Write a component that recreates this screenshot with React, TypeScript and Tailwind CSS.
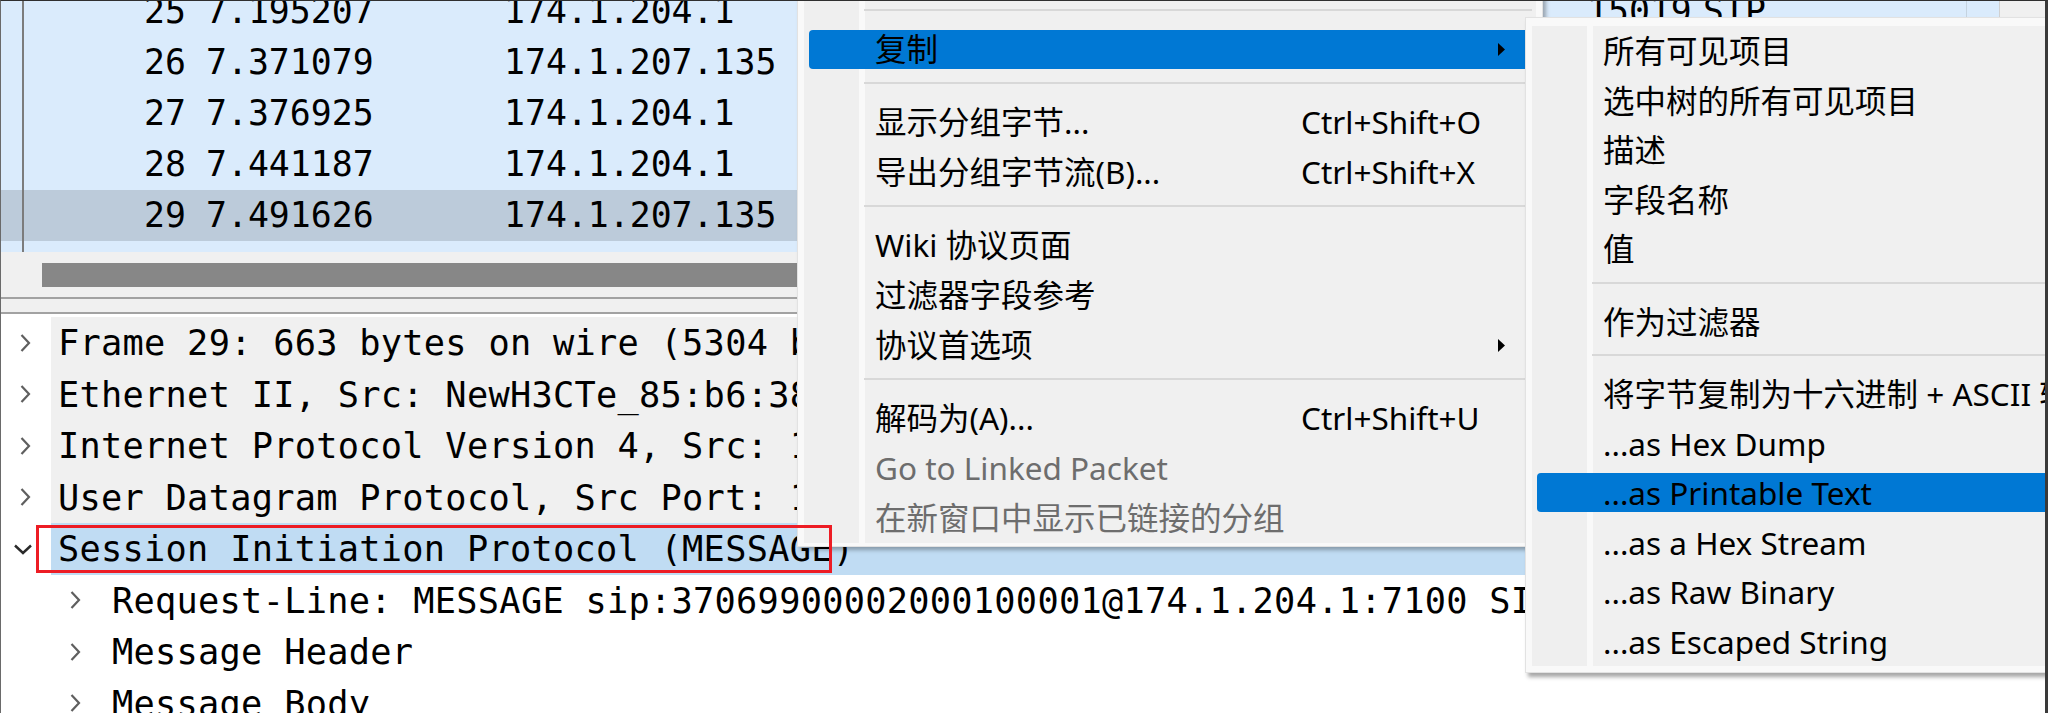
import React from 'react'

const packets = [
  { no: '25', time: '7.195207', src: '174.1.204.1', port: '15019', proto: 'SIP' },
  { no: '26', time: '7.371079', src: '174.1.207.135', port: '7100', proto: 'SIP' },
  { no: '27', time: '7.376925', src: '174.1.204.1', port: '15019', proto: 'SIP' },
  { no: '28', time: '7.441187', src: '174.1.204.1', port: '15019', proto: 'SIP' },
  { no: '29', time: '7.491626', src: '174.1.207.135', port: '7100', proto: 'SIP', selected: true },
]

const tree = [
  { level: 0, shade: true, text: 'Frame 29: 663 bytes on wire (5304 bits), 663 bytes captured (5304 bits) on interface 0' },
  { level: 0, shade: true, text: 'Ethernet II, Src: NewH3CTe_85:b6:38' },
  { level: 0, shade: true, text: 'Internet Protocol Version 4, Src: 174.1.207.135, Dst: 174.1.204.1' },
  { level: 0, shade: true, text: 'User Datagram Protocol, Src Port: 15019, Dst Port: 7100' },
  { level: 0, open: true, selected: true, text: 'Session Initiation Protocol (MESSAGE)' },
  { level: 1, text: 'Request-Line: MESSAGE sip:37069900002000100001@174.1.204.1:7100 SIP/2.0' },
  { level: 1, text: 'Message Header' },
  { level: 1, text: 'Message Body' },
]

export default function App() {
  return (
    <div className="relative h-[713px] w-[2048px] overflow-hidden border-t border-l border-r-[3px] border-t-[#2f2f2f] border-l-[#6a6a6a] border-r-[#3a3a3a] bg-white font-['DejaVu_Sans_Mono',monospace] text-black">
      {/* Packet list */}
      <div className="flex h-[251px] bg-[#daebfc]">
        <div className="relative flex-1 overflow-hidden">
          <div className="-mt-[15px]">
            {packets.map((p) => (
              <PacketRow key={p.no} {...p} />
            ))}
          </div>
          {/* related packet line + column divider */}
          <div className="absolute left-[21px] top-0 h-full w-[2px] bg-[#7c7c7c]" />
          <div className="absolute left-[1965px] top-0 h-full w-px bg-[#c5d3e0]" />
        </div>
        <div className="w-[46px] border-l border-[#d0d0d0] bg-[#f0f0f0]" />
      </div>

      {/* Horizontal scrollbar + splitter */}
      <div className="h-[45px] bg-[#f0f0f0] pl-[41px] pt-[11px]">
        <div className="h-[24px] w-[1200px] bg-[#878787]" />
      </div>
      <div className="h-[17px] border-y-2 border-[#a2a2a2] bg-[#f0f0f0]" />

      {/* Packet details */}
      <div className="pt-[3px]">
        {tree.map((row, i) => (
          <TreeRow key={i} {...row} />
        ))}
      </div>

      {/* Context menu */}
      <div className="absolute left-[796px] top-[-7px] w-[746px] border border-[#e2e2e2] bg-[#f9f9f9] px-[6px] pt-[6px] pb-[3px] font-['Noto_Sans','Noto_Sans_CJK_SC',sans-serif] text-[31.5px] leading-none shadow-[3px_3px_4px_rgba(0,0,0,0.3)]">
        <div className="bg-[linear-gradient(to_right,#efefef_55px,#f9f9f9_55px,#f9f9f9_61px,#f0f0f0_61px)]">
          <Separator />
          <MenuItem label="复制" arrow active />
          <Separator />
          <MenuItem label="显示分组字节..." shortcut="Ctrl+Shift+O" />
          <MenuItem label="导出分组字节流(B)..." shortcut="Ctrl+Shift+X" />
          <Separator />
          <MenuItem label="Wiki 协议页面" />
          <MenuItem label="过滤器字段参考" />
          <MenuItem label="协议首选项" arrow />
          <Separator />
          <MenuItem label="解码为(A)..." shortcut="Ctrl+Shift+U" />
          <MenuItem label="Go to Linked Packet" disabled />
          <MenuItem label="在新窗口中显示已链接的分组" disabled />
        </div>
      </div>

      {/* Copy submenu */}
      <div className="absolute left-[1524px] top-[16px] w-[600px] border border-[#e2e2e2] bg-[#f9f9f9] px-[6px] pt-[8px] pb-[6px] font-['Noto_Sans','Noto_Sans_CJK_SC',sans-serif] text-[31.5px] leading-none shadow-[3px_4px_4px_rgba(0,0,0,0.35)]">
        <div className="bg-[linear-gradient(to_right,#efefef_55px,#f9f9f9_55px,#f9f9f9_61px,#f0f0f0_61px)]">
          <MenuItem sub label="所有可见项目" />
          <MenuItem sub label="选中树的所有可见项目" />
          <MenuItem sub label="描述" />
          <MenuItem sub label="字段名称" />
          <MenuItem sub label="值" />
          <Separator />
          <MenuItem sub label="作为过滤器" />
          <Separator />
          <MenuItem sub label="将字节复制为十六进制 + ASCII 转储" />
          <MenuItem sub label="...as Hex Dump" />
          <MenuItem sub label="...as Printable Text" active />
          <MenuItem sub label="...as a Hex Stream" />
          <MenuItem sub label="...as Raw Binary" />
          <MenuItem sub label="...as Escaped String" />
        </div>
      </div>

      {/* annotation */}
      <div className="pointer-events-none absolute left-[35px] top-[524px] h-[48px] w-[796px] border-[3px] border-[#ed1c24]" />
    </div>
  )
}

function PacketRow({ no, time, src, port, proto, selected }: any) {
  return (
    <div
      className={`flex h-[51px] items-center whitespace-nowrap text-[34.8px] leading-none ${
        selected ? 'bg-[#bccbda]' : ''
      }`}
    >
      <span className="w-[185px] shrink-0 text-right">{no}</span>
      <span className="w-[318px] shrink-0 pl-[20px]">{time}</span>
      <span className="w-[1083px] shrink-0">{src}</span>
      <span className="w-[116px] shrink-0">{port}</span>
      <span>{proto}</span>
    </div>
  )
}

function TreeRow({ level, text, open, shade, selected }: any) {
  const bg = selected ? 'bg-[#c0dcf3]' : shade ? 'bg-[#f0f0f0]' : 'bg-white'
  return (
    <div className="flex h-[51.5px] whitespace-nowrap text-[35.3px] leading-none tracking-[0.27px]">
      <div className={`flex w-[50px] shrink-0 items-center ${open ? 'pl-[12px]' : 'pl-[18px]'}`}>
        {level === 0 && (open ? <ChevronDown /> : <ChevronRight />)}
      </div>
      <div className={`flex flex-1 items-center ${bg} ${level === 0 ? 'pl-[7px]' : 'pl-[18px]'}`}>
        {level === 1 && (
          <span className="mr-[31px]">
            <ChevronRight />
          </span>
        )}
        <span>{text}</span>
      </div>
    </div>
  )
}

function ChevronRight() {
  return (
    <svg width="12" height="20" viewBox="0 0 12 20" className="block shrink-0">
      <path d="M2.5 2 L10 10 L2.5 18" fill="none" stroke="#5f5f5f" strokeWidth="2.2" />
    </svg>
  )
}

function ChevronDown() {
  return (
    <svg width="20" height="12" viewBox="0 0 20 12" className="block shrink-0">
      <path d="M2 2.5 L10 10 L18 2.5" fill="none" stroke="#2a2a2a" strokeWidth="2.4" />
    </svg>
  )
}

function Separator() {
  return (
    <div className="h-[23px] pl-[60px] pr-[4px] pt-[8px]">
      <div className="h-[2px] bg-[#d8d8d8]" />
    </div>
  )
}

function MenuItem({ label, shortcut, arrow, active, disabled, sub }: any) {
  return (
    <div className={`flex items-center px-[5px] ${sub ? 'h-[49.5px]' : 'h-[50px]'}`}>
      <div
        className={`flex h-[39px] flex-1 items-center rounded-[4px] pl-[66px] ${
          active ? 'bg-[#0078d4]' : ''
        }`}
      >
        <span className={`flex-1 whitespace-nowrap ${disabled ? 'text-[#6d6d6d]' : 'text-black'}`}>
          {label}
        </span>
        {shortcut && <span className="w-[230px] shrink-0 whitespace-nowrap">{shortcut}</span>}
        {arrow && (
          <svg width="7" height="13" viewBox="0 0 7 13" className="mr-[26px] shrink-0">
            <path d="M0 0 L7 6.5 L0 13 Z" fill="#000" />
          </svg>
        )}
      </div>
    </div>
  )
}
